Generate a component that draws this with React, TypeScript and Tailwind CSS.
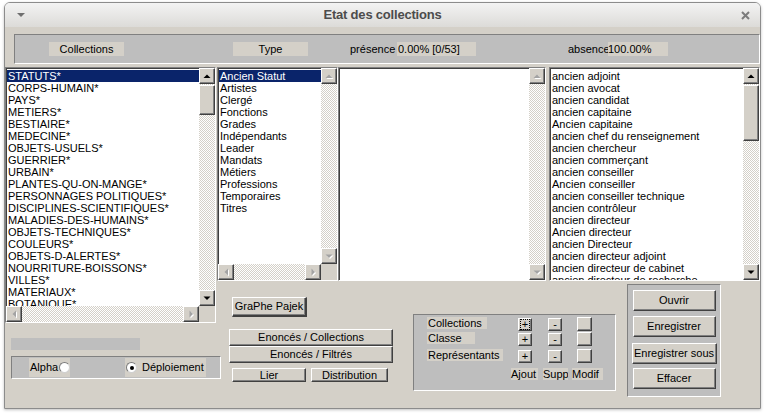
import React from 'react';
import { clsx } from 'clsx';

const categories = [
  'STATUTS*',
  'CORPS-HUMAIN*',
  'PAYS*',
  'METIERS*',
  'BESTIAIRE*',
  'MEDECINE*',
  'OBJETS-USUELS*',
  'GUERRIER*',
  'URBAIN*',
  'PLANTES-QU-ON-MANGE*',
  'PERSONNAGES POLITIQUES*',
  'DISCIPLINES-SCIENTIFIQUES*',
  'MALADIES-DES-HUMAINS*',
  'OBJETS-TECHNIQUES*',
  'COULEURS*',
  'OBJETS-D-ALERTES*',
  'NOURRITURE-BOISSONS*',
  'VILLES*',
  'MATERIAUX*',
  'BOTANIQUE*',
];

const types = [
  'Ancien Statut',
  'Artistes',
  'Clergé',
  'Fonctions',
  'Grades',
  'Indépendants',
  'Leader',
  'Mandats',
  'Métiers',
  'Professions',
  'Temporaires',
  'Titres',
];

const representants = [
  'ancien adjoint',
  'ancien avocat',
  'ancien candidat',
  'ancien capitaine',
  'Ancien capitaine',
  'ancien chef du renseignement',
  'ancien chercheur',
  'ancien commerçant',
  'ancien conseiller',
  'Ancien conseiller',
  'ancien conseiller technique',
  'ancien contrôleur',
  'ancien directeur',
  'Ancien directeur',
  'ancien Directeur',
  'ancien directeur adjoint',
  'ancien directeur de cabinet',
  'ancien directeur de recherche',
];

// classic Tk look
const raised =
  'bg-[#d4d0c8] border border-t-white border-l-white border-r-[#404040] border-b-[#404040] shadow-[inset_-1px_-1px_0_#808080]';
const sunken = 'border border-t-[#808080] border-l-[#808080] border-r-white border-b-white';
const trough =
  'bg-[image:repeating-conic-gradient(#d4d0c8_0%_25%,#ffffff_0%_50%)] bg-[length:2px_2px]';

type Dir = 'up' | 'down' | 'left' | 'right';

const arrowPts: Record<Dir, string> = {
  up: '3.5,9 7,5.5 10.5,9',
  down: '3.5,5.5 7,9 10.5,5.5',
  left: '9,3.5 5.5,7 9,10.5',
  right: '5.5,3.5 9,7 5.5,10.5',
};

function ArrowBtn({ dir, on }: { dir: Dir; on?: boolean }) {
  const pts = arrowPts[dir];
  return (
    <div className={clsx('w-[16px] h-[16px] shrink-0 flex items-center justify-center', raised)}>
      <svg width="14" height="14" viewBox="0 0 14 14">
        {on ? (
          <polygon points={pts} fill="#000" />
        ) : (
          <>
            <polygon points={pts} fill="#fff" transform="translate(1,1)" />
            <polygon points={pts} fill="#a3a3a3" />
          </>
        )}
      </svg>
    </div>
  );
}

function VScroll({ thumb, on }: { thumb?: string; on?: boolean }) {
  return (
    <div className={clsx('w-[16px] shrink-0 flex flex-col', trough)}>
      <ArrowBtn dir="up" on={on} />
      <div className="flex-1 min-h-0">{thumb && <div className={clsx(thumb, raised)} />}</div>
      <ArrowBtn dir="down" on={on} />
    </div>
  );
}

function HScroll() {
  return (
    <div className={clsx('flex-1 h-[16px] flex', trough)}>
      <ArrowBtn dir="left" />
      <div className="flex-1" />
      <ArrowBtn dir="right" />
    </div>
  );
}

interface ListPanelProps {
  size: string;
  items: string[];
  sel?: number;
  thumb?: string;
  on?: boolean;
  hscroll?: boolean;
}

function ListPanel({ size, items, sel, thumb, on, hscroll }: ListPanelProps) {
  return (
    <div className={clsx(size, 'shrink-0 flex flex-col', sunken)}>
      <div className="flex flex-1 min-h-0">
        <div className="flex-1 min-w-0 overflow-hidden bg-white border-t border-l border-[#404040] pt-[1px]">
          {items.map((t, i) => (
            <div
              key={i}
              className={clsx(
                'h-[12px] leading-[12px] pl-[1px] whitespace-nowrap',
                i === sel ? 'bg-[#0a246a] text-white' : 'text-black',
              )}
            >
              {t}
            </div>
          ))}
        </div>
        <VScroll thumb={thumb} on={on} />
      </div>
      {hscroll && (
        <div className="flex h-[16px] shrink-0">
          <HScroll />
          <div className="w-[16px] bg-[#d4d0c8]" />
        </div>
      )}
    </div>
  );
}

function Radio({ on }: { on?: boolean }) {
  return (
    <span className="w-[11px] h-[11px] rounded-full bg-white border border-t-[#7a7a7a] border-l-[#7a7a7a] border-r-[#d0d0d0] border-b-[#d0d0d0] flex items-center justify-center">
      {on && <span className="w-[4px] h-[4px] rounded-full bg-black" />}
    </span>
  );
}

function TkButton({ className, children }: { className?: string; children?: React.ReactNode }) {
  return (
    <div className={clsx('flex items-center justify-center leading-none whitespace-nowrap', raised, className)}>
      {children}
    </div>
  );
}

export default function App() {
  return (
    <div className="w-[767px] h-[414px] bg-white overflow-hidden font-['Liberation_Sans',Arial,sans-serif] text-[11px] text-black">
      <div className="ml-[4px] mt-[2px] w-[757px] h-[407px] border border-[#8c8c8c] rounded-t-[6px] flex flex-col overflow-hidden shadow-[0_1px_3px_rgba(0,0,0,0.25)]">
        {/* Title bar */}
        <div className="h-[24px] shrink-0 bg-linear-to-b from-[#f3f3f3] to-[#dcdbd8] grid grid-cols-[1fr_auto_1fr] items-center">
          <div className="pl-[12px] flex">
            <svg width="8" height="5" viewBox="0 0 8 5">
              <polygon points="0,0 8,0 4,4" fill="#6f6f6f" />
            </svg>
          </div>
          <div className="font-bold text-[13px] text-[#4c4c4c] tracking-[-0.2px]">Etat des collections</div>
          <div className="pr-[10px] flex justify-end">
            <svg width="9" height="9" viewBox="0 0 9 9">
              <path d="M1 1L8 8M8 1L1 8" stroke="#7c7c7c" strokeWidth="2" />
            </svg>
          </div>
        </div>

        {/* Body */}
        <div className="flex-1 bg-[#d4d0c8] flex flex-col">
          {/* Header */}
          <div
            className={clsx(
              'mt-[7px] ml-[9px] h-[30px] shrink-0 bg-[#bebebe] flex items-center whitespace-nowrap',
              sunken,
            )}
          >
            <span className="ml-[34px] w-[75px] h-[14px] leading-[14px] bg-[#d4d0c8] text-center">Collections</span>
            <span className="ml-[109px] w-[75px] h-[14px] leading-[14px] bg-[#d4d0c8] text-center">Type</span>
            <span className="ml-[42px] w-[47px]">présence</span>
            <span className="w-[79px] h-[14px] leading-[14px] bg-[#d4d0c8] pl-[1px]">0.00% [0/53]</span>
            <span className="ml-[92px] w-[40px] overflow-hidden">absence</span>
            <span className="w-[60px] h-[14px] leading-[14px] bg-[#d4d0c8]">100.00%</span>
          </div>

          {/* Main */}
          <div className="mt-[3px] flex">
            {/* Left column */}
            <div className="w-[212px] shrink-0 flex flex-col">
              <ListPanel size="w-[211px] h-[256px]" items={categories} sel={0} thumb="mt-[1px] h-[30px]" on hscroll />
              <div className="mt-[15px] ml-[6px] w-[129px] h-[12px] bg-[#bebebe]" />
              <div className={clsx('mt-[6px] ml-[6px] w-[210px] h-[23px] bg-[#bebebe] flex items-center', sunken)}>
                <div className="ml-[17px] w-[41px] h-[19px] bg-[#d4d0c8] flex items-center pl-[1px] gap-[1px]">
                  <span>Alpha</span>
                  <Radio />
                </div>
                <div className="ml-[55px] w-[81px] h-[19px] bg-[#d4d0c8] flex items-center pl-[1px] gap-[5px]">
                  <Radio on />
                  <span>Déploiement</span>
                </div>
              </div>
            </div>

            {/* Right column */}
            <div className="w-[543px] shrink-0 flex flex-col">
              <div className="flex h-[214px]">
                <ListPanel size="w-[121px] h-full" items={types} sel={0} hscroll />
                <ListPanel size="w-[208px] h-full" items={[]} />
                <ListPanel size="ml-[3px] w-[211px] h-full" items={representants} thumb="mt-[1px] h-[56px]" on />
              </div>

              <div className="flex items-start">
                {/* Action buttons */}
                <div className="ml-[12px] w-[164px] flex flex-col">
                  <TkButton className="mt-[16px] ml-[3px] w-[75px] h-[20px] border-r-2 border-b-2">GraPhe Pajek</TkButton>
                  <TkButton className="mt-[12px] h-[17px]">Enoncés / Collections</TkButton>
                  <TkButton className="h-[17px]">Enoncés / Filtrés</TkButton>
                  <div className="mt-[5px] flex">
                    <TkButton className="ml-[3px] w-[74px] h-[14px]">Lier</TkButton>
                    <TkButton className="ml-[5px] w-[77px] h-[14px]">Distribution</TkButton>
                  </div>
                </div>

                {/* Collections / Classe / Représentants */}
                <div className={clsx('ml-[20px] mt-[33px] w-[203px] h-[77px] bg-[#bebebe] pt-[2px] pl-[13px]', sunken)}>
                  {[
                    { label: 'Collections', w: 'w-[60px]', h: 'h-[15px]', focus: true },
                    { label: 'Classe', w: 'w-[48px]', h: 'h-[16px]' },
                    { label: 'Représentants', w: 'w-[76px]', h: 'mt-[1px] h-[15px]' },
                  ].map((r) => (
                    <div key={r.label} className={clsx('flex items-start', r.h)}>
                      <div className="w-[91px]">
                        <div className={clsx(r.w, 'h-[12px] leading-[12px] bg-[#d4d0c8] pl-[1px]')}>{r.label}</div>
                      </div>
                      <TkButton className="mt-[1px] w-[14px] h-[13px]">
                        <span
                          className={clsx(
                            'px-[1px] leading-[9px]',
                            r.focus && 'outline-1 outline-dotted outline-black',
                          )}
                        >
                          +
                        </span>
                      </TkButton>
                      <TkButton className="mt-[1px] ml-[16px] w-[14px] h-[13px]">-</TkButton>
                      <TkButton className="ml-[15px] w-[15px] h-[14px]" />
                    </div>
                  ))}
                  <div className="mt-[4px] ml-[84px] flex">
                    <span className="w-[27px] h-[12px] leading-[12px] bg-[#d4d0c8]">Ajout</span>
                    <span className="ml-[5px] w-[25px] h-[12px] leading-[12px] bg-[#d4d0c8] overflow-hidden whitespace-nowrap">Suppr</span>
                    <span className="ml-[4px] w-[31px] h-[12px] leading-[12px] bg-[#d4d0c8]">Modif</span>
                  </div>
                </div>

                {/* File buttons */}
                <div className={clsx('ml-[11px] mt-[3px] w-[94px] h-[113px] bg-[#bebebe] flex flex-col items-center pt-[5px]', sunken)}>
                  <TkButton className="w-[83px] h-[21px]">Ouvrir</TkButton>
                  <TkButton className="mt-[5px] w-[83px] h-[21px]">Enregistrer</TkButton>
                  <TkButton className="mt-[6px] w-[85px] h-[21px]">Enregistrer sous</TkButton>
                  <TkButton className="mt-[4px] w-[83px] h-[21px]">Effacer</TkButton>
                </div>
              </div>
            </div>
          </div>
        </div>
      </div>
    </div>
  );
}
